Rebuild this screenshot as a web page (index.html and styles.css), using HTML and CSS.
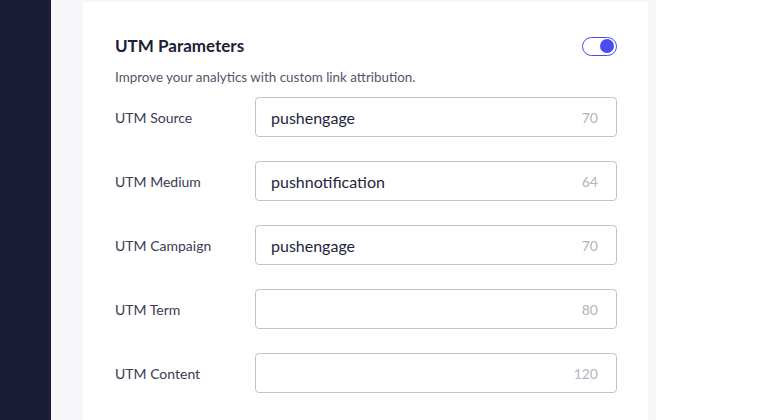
FILE: index.html
```html
<!DOCTYPE html>
<html>
<head>
<meta charset="utf-8">
<link rel="stylesheet" href="styles.css">
</head>
<body>
<div class="app">
  <aside class="sidebar"></aside>
  <main class="main">
    <section class="card">
      <div class="head">
        <h2 class="title">UTM Parameters</h2>
        <span class="toggle"><span class="knob"></span></span>
      </div>
      <p class="desc">Improve your analytics with custom link attribution.</p>
      <div class="rows">
        <div class="row"><label>UTM Source</label><div class="field"><span class="val">pushengage</span><span class="count">70</span></div></div>
        <div class="row"><label>UTM Medium</label><div class="field"><span class="val">pushnotification</span><span class="count">64</span></div></div>
        <div class="row"><label>UTM Campaign</label><div class="field"><span class="val">pushengage</span><span class="count">70</span></div></div>
        <div class="row"><label>UTM Term</label><div class="field"><span class="val"></span><span class="count">80</span></div></div>
        <div class="row"><label>UTM Content</label><div class="field"><span class="val"></span><span class="count">120</span></div></div>
      </div>
    </section>
  </main>
</div>
</body>
</html>
```
FILE: styles.css
```css
html, body { margin: 0; padding: 0; background: #ffffff; }
body { font-family: Lato, "Open Sans", sans-serif; }
.app { display: flex; height: 420px; overflow: hidden; }
.sidebar { width: 51px; flex: none; background: #1b1c38; }
.main { width: 569px; flex: none; background: #f7f7fa; padding: 2px 4px 0 32px; }
.card { background: #ffffff; width: 502px; height: 440px; padding: 34px 31px 0 32px; }
.head { display: flex; align-items: center; justify-content: space-between; height: 20px; }
.title { margin: 0; font-size: 17px; font-weight: 700; color: #1f2037; line-height: 20px; }
.toggle { width: 29px; height: 17px; border: 1.5px solid #4a4cf0; border-radius: 11px; display: flex; align-items: center; justify-content: flex-end; padding: 0 2px; box-sizing: content-box; }
.knob { width: 14px; height: 14px; border-radius: 50%; background: #4a4cf0; }
.desc { margin: 13px 0 0; font-size: 13.4px; line-height: 16px; color: #54556a; }
.rows { margin-top: 12px; display: flex; flex-direction: column; gap: 24px; }
.row { display: flex; align-items: center; }
.row label { width: 140px; flex: none; font-size: 14px; color: #3a3b52; }
.field { flex: 1; height: 38px; border: 1px solid #c3c2cf; border-radius: 4px; display: flex; align-items: center; justify-content: space-between; padding: 0 18px 0 15px; }
.val { font-size: 16px; color: #24253d; }
.count { font-size: 14px; color: #b3b2c0; }
```
